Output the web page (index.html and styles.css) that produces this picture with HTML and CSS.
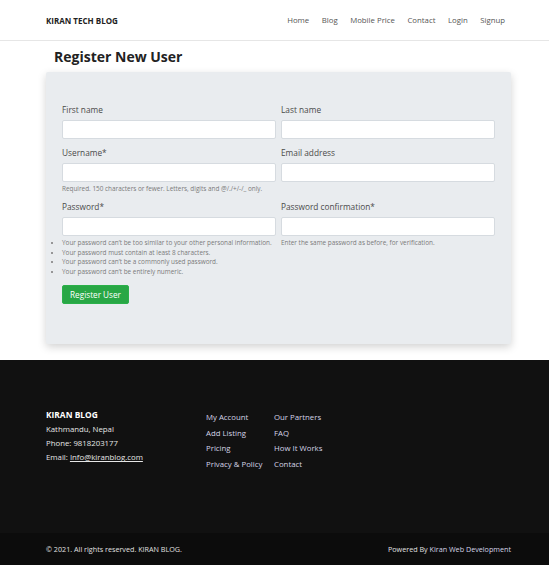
FILE: index.html
```html
<!DOCTYPE html>
<html lang="en">
<head>
<meta charset="utf-8">
<title>Register New User</title>
<link rel="stylesheet" href="styles.css">
</head>
<body>
<header class="navbar">
  <a class="brand" href="#">KIRAN TECH BLOG</a>
  <nav class="nav">
    <a href="#">Home</a>
    <a href="#">Blog</a>
    <a href="#">Mobile Price</a>
    <a href="#">Contact</a>
    <a href="#">Login</a>
    <a href="#">Signup</a>
  </nav>
</header>

<main class="main">
  <h1 class="title">Register New User</h1>
  <div class="card">
    <form class="form">
      <div class="field">
        <label>First name</label>
        <input type="text">
      </div>
      <div class="field">
        <label>Last name</label>
        <input type="text">
      </div>
      <div class="field">
        <label>Username*</label>
        <input type="text">
        <small class="help">Required. 150 characters or fewer. Letters, digits and @/./+/-/_ only.</small>
      </div>
      <div class="field">
        <label>Email address</label>
        <input type="email">
      </div>
      <div class="field">
        <label>Password*</label>
        <input type="password">
        <ul class="help-list">
          <li>Your password can’t be too similar to your other personal information.</li>
          <li>Your password must contain at least 8 characters.</li>
          <li>Your password can’t be a commonly used password.</li>
          <li>Your password can’t be entirely numeric.</li>
        </ul>
      </div>
      <div class="field">
        <label>Password confirmation*</label>
        <input type="password">
        <small class="help">Enter the same password as before, for verification.</small>
      </div>
      <div class="actions">
        <button type="button" class="btn">Register User</button>
      </div>
    </form>
  </div>
</main>

<footer class="footer">
  <div class="footer-top">
    <div class="footer-info">
      <div class="footer-name">KIRAN BLOG</div>
      <div>Kathmandu, Nepal</div>
      <div>Phone: 9818203177</div>
      <div>Email: <a href="#" class="mail">Info@kiranblog.com</a></div>
    </div>
    <ul class="footer-links">
      <li><a href="#">My Account</a></li>
      <li><a href="#">Add Listing</a></li>
      <li><a href="#">Pricing</a></li>
      <li><a href="#">Privacy &amp; Policy</a></li>
    </ul>
    <ul class="footer-links">
      <li><a href="#">Our Partners</a></li>
      <li><a href="#">FAQ</a></li>
      <li><a href="#">How It Works</a></li>
      <li><a href="#">Contact</a></li>
    </ul>
  </div>
  <div class="footer-bottom">
    <span>© 2021. All rights reserved. KIRAN BLOG.</span>
    <span>Powered By <a href="#">Kiran Web Development</a></span>
  </div>
</footer>
</body>
</html>
```

FILE: styles.css
```css
* { box-sizing: border-box; }
html, body { margin: 0; padding: 0; }
body {
  font-family: "Open Sans", "Noto Sans", sans-serif;
  color: #333;
  background: #fff;
  width: 549px;
}
a { text-decoration: none; color: inherit; }

.navbar {
  height: 41px;
  border-bottom: 1px solid #e6e6e6;
  display: flex;
  align-items: center;
  justify-content: space-between;
  padding: 0 44px 0 46px;
}
.brand {
  font-size: 8px;
  font-weight: 700;
  color: #222;
  letter-spacing: 0;
}
.nav { display: flex; gap: 12.5px; }
.nav a { font-size: 7.8px; color: #555; }

.main { padding: 0 38px 0 46px; }
.title {
  margin: 0;
  padding: 6px 0 0 8px;
  height: 31px;
  font-size: 14px;
  font-weight: 700;
  color: #222;
  line-height: 20px;
}
.card {
  background: #e9ecef;
  box-shadow: 0 3px 8px rgba(0,0,0,0.18);
  border-radius: 2px;
  padding: 32px 16px 40px;
}
.form {
  display: grid;
  grid-template-columns: 1fr 1fr;
  column-gap: 5px;
  row-gap: 8px;
}
.field { display: flex; flex-direction: column; }
.field label {
  font-size: 8.3px;
  color: #4a4a4a;
  line-height: 12px;
  margin-bottom: 4px;
}
.field input {
  height: 19px;
  border: 1px solid #d6dbe0;
  border-radius: 2px;
  background: #fff;
  margin: 0;
}
.help {
  font-size: 6.4px;
  color: #7a7a7a;
  line-height: 9px;
  margin-top: 2px;
}
.help-list {
  margin: 2px 0 0;
  padding: 0;
  list-style: disc;
  font-size: 6.4px;
  color: #7a7a7a;
  line-height: 9.6px;
}
.actions { grid-column: 1 / 3; margin-top: -3px; }
.btn {
  background: #28a745;
  color: #fff;
  border: 1px solid #2bb04a;
  border-radius: 2px;
  font-family: inherit;
  font-size: 8.2px;
  width: 67px;
  height: 19px;
  padding: 0;
}

.footer {
  margin-top: 16px;
  background: #111111;
  color: #e6e6e6;
}
.footer-top {
  height: 173px;
  display: flex;
  align-items: flex-start;
  padding: 48px 0 0 46px;
  font-size: 7.8px;
}
.footer-info { width: 160px; line-height: 14px; }
.footer-name { font-weight: 700; font-size: 8.4px; color: #fff; }
.mail { text-decoration: underline; color: #e6e6e6; }
.footer-links {
  list-style: none;
  margin: 2px 0 0;
  padding: 0;
  line-height: 15.5px;
}
.footer-links:nth-of-type(1) { width: 68px; }
.footer-links a { color: #d4d4e6; }
.footer-bottom {
  height: 32px;
  background: #0c0c0c;
  display: flex;
  align-items: center;
  justify-content: space-between;
  padding: 0 38px 0 46px;
  font-size: 7.2px;
  color: #e0e0e0;
}
.footer-bottom a { color: #d4d4e6; }
```
